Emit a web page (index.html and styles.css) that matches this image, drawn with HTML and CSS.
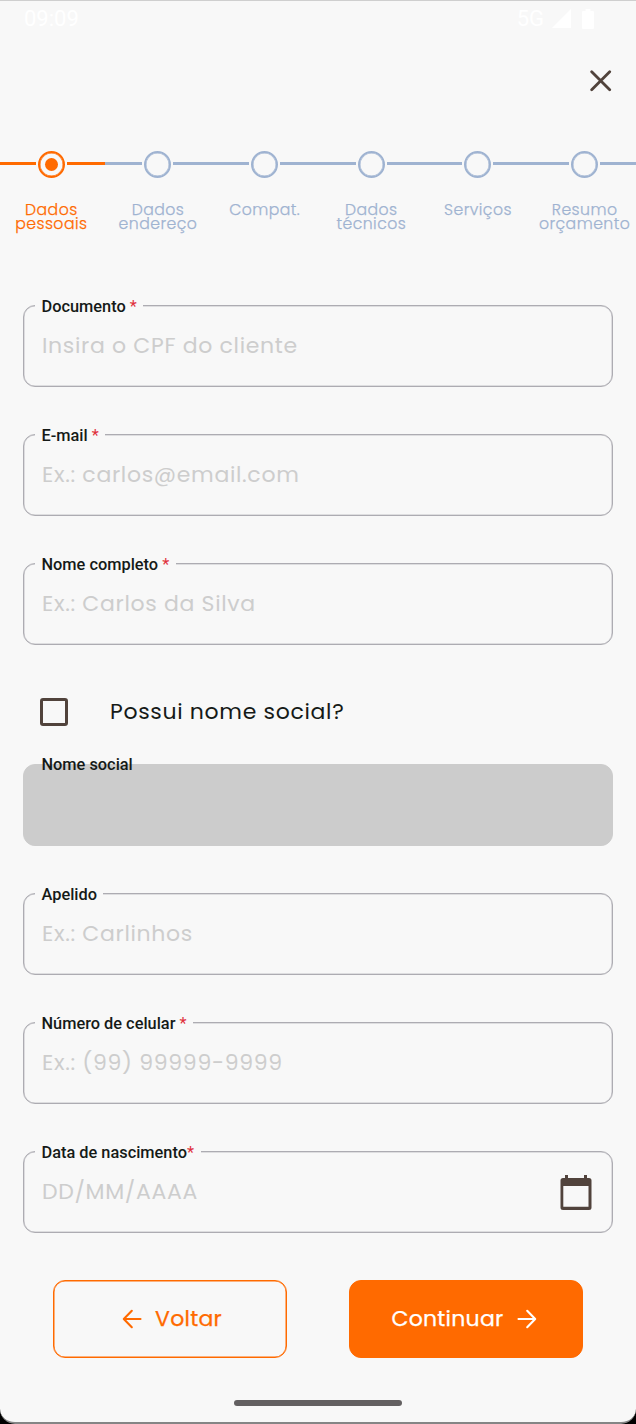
FILE: index.html
```html
<!DOCTYPE html>
<html lang="pt-BR">
<head>
<meta charset="utf-8">
<title>Dados pessoais</title>
<link rel="stylesheet" href="styles.css">
</head>
<body>
<main class="screen">
  <header class="status">
    <span>09:09</span>
    <div class="status-icons">
      <span>5G</span>
      <svg class="signal" width="19" height="19" viewBox="0 0 19 19"><path d="M19 0V19H0Z" fill="#fff"/></svg>
      <svg width="12" height="20" viewBox="0 0 12 20"><path d="M3.500 0h5v2H11a1 1 0 0 1 1 1v16a1 1 0 0 1-1 1H1a1 1 0 0 1-1-1V3a1 1 0 0 1 1-1h2.500Z" fill="#fff"/></svg>
    </div>
  </header>

  <div class="topbar">
    <svg width="22" height="22" viewBox="0 0 22 22"><path d="M1.700 1.800 19.700 19.800M19.700 1.800 1.700 19.800" fill="none" stroke="#51433c" stroke-width="2.800" stroke-linecap="round"/></svg>
  </div>

  <ol class="stepper">
    <li class="step active"><div class="track"><i class="dot"></i></div><p>Dados<br>pessoais</p></li>
    <li class="step"><div class="track"><i class="dot"></i></div><p>Dados<br>endereço</p></li>
    <li class="step"><div class="track"><i class="dot"></i></div><p>Compat.</p></li>
    <li class="step"><div class="track"><i class="dot"></i></div><p>Dados<br>técnicos</p></li>
    <li class="step"><div class="track"><i class="dot"></i></div><p>Serviços</p></li>
    <li class="step"><div class="track"><i class="dot"></i></div><p>Resumo<br>orçamento</p></li>
  </ol>

  <form class="form">
    <div class="field"><label>Documento <b>*</b></label><span class="hint">Insira o CPF do cliente</span></div>
    <div class="field"><label>E-mail <b>*</b></label><span class="hint">Ex.: carlos@email.com</span></div>
    <div class="field"><label>Nome completo <b>*</b></label><span class="hint">Ex.: Carlos da Silva</span></div>
    <div class="check"><i class="box"></i><span>Possui nome social?</span></div>
    <div class="field disabled"><label>Nome social</label></div>
    <div class="field"><label>Apelido</label><span class="hint">Ex.: Carlinhos</span></div>
    <div class="field"><label>Número de celular <b>*</b></label><span class="hint">Ex.: (99) 99999-9999</span></div>
    <div class="field"><label>Data de nascimento<b>*</b></label><span class="hint">DD/MM/AAAA</span>
      <svg class="calendar" width="32" height="36" viewBox="0 0 32 36"><path fill="#51433c" fill-rule="evenodd" d="M5 0h3v3h16V0h3v3h2a2.500 2.500 0 0 1 2.500 2.500v27A2.500 2.500 0 0 1 29 35H3a2.500 2.500 0 0 1-2.500-2.500v-27A2.500 2.500 0 0 1 3 3h2ZM3.300 11v20.800h25.200V11Z"/></svg>
    </div>
  </form>

  <div class="actions">
    <button class="btn outline" type="button">
      <svg width="20" height="20" viewBox="0 0 20 20"><path d="M18.500 10H2M9.800 1.800 1.800 10l8 8.200" fill="none" stroke="currentColor" stroke-width="2.100" stroke-linecap="round" stroke-linejoin="round"/></svg>
      <span>Voltar</span>
    </button>
    <button class="btn solid" type="button">
      <span>Continuar</span>
      <svg width="20" height="20" viewBox="0 0 20 20"><path d="M1.500 10H18M10.200 1.800l8 8.200-8 8.200" fill="none" stroke="currentColor" stroke-width="2.100" stroke-linecap="round" stroke-linejoin="round"/></svg>
    </button>
  </div>

  <div class="home"></div>
</main>
</body>
</html>
```
FILE: styles.css
```css
* { box-sizing: border-box; }
body { margin: 0; background: #000; }

.screen {
  display: flex;
  flex-direction: column;
  height: 1424px;
  overflow: hidden;
  border-top: 1px solid #cfcfcf;
  border-bottom: 2px solid #858585;
  border-radius: 0 0 15px 15px;
  background: #f8f8f8;
  color: #151a17;
  font-family: Poppins, Inter, "Open Sans", sans-serif;
}

.status {
  display: flex;
  justify-content: space-between;
  height: 36px;
  padding: 5px 42px 0 24px;
  color: #fff;
  font: 400 22px/26px Roboto, sans-serif;
}
.status-icons { display: flex; align-items: flex-start; }
.status-icons svg { margin-top: 3px; }
.status-icons .signal { margin: 3px 11px 0 8px; }

.topbar {
  display: flex;
  justify-content: flex-end;
  height: 113px;
  padding: 33px 24px 0 0;
}

.stepper {
  display: grid;
  grid-template-columns: repeat(6, 106.67px);
  height: 155px;
  margin: 0 -2px;
  padding: 0;
  list-style: none;
}
.step { color: #9fb3d1; }
.step.active { color: #ff6a00; }
.track {
  display: flex;
  align-items: center;
  gap: 2px;
  height: 28px;
}
.track::before, .track::after {
  content: "";
  flex: 1;
  height: 3px;
  margin-bottom: 1px;
  background: currentColor;
}
.dot {
  display: grid;
  place-items: center;
  width: 27px;
  height: 27px;
  border: 2px solid currentColor;
  border-radius: 50%;
  box-shadow: inset 0 0 0 0.5px currentColor;
}
.active .dot::before {
  content: "";
  width: 13px;
  height: 13px;
  border-radius: 50%;
  background: currentColor;
}
.step p {
  margin: 25px 0 0;
  font-size: 15.7px;
  font-weight: 300;
  letter-spacing: 0.45px;
  line-height: 14px;
  text-align: center;
  white-space: nowrap;
  -webkit-text-stroke: 0.25px currentColor;
}

.form {
  display: flex;
  flex-direction: column;
  gap: 47px;
  padding: 0 23px;
}
.field {
  position: relative;
  display: flex;
  align-items: center;
  justify-content: space-between;
  height: 82px;
  padding: 0 20px 2px 18px;
  border: 1px solid #adacb2;
  border-radius: 12px;
  box-shadow: inset 0 0 0 0.5px #c4c3c8;
}
.field label {
  position: absolute;
  top: -10px;
  left: 11px;
  padding: 0 6.5px;
  background: #f8f8f8;
  font: 500 16.35px/22px Roboto, sans-serif;
  white-space: nowrap;
}
.field b { color: #e0303c; font-weight: 400; }
.hint {
  color: #cdcdcd;
  font-size: 22px;
  letter-spacing: 0.67px;
}
.disabled { border-color: #ccc; background: #ccc; box-shadow: none; }
.disabled label { top: -11px; background: none; }
.calendar { margin-top: 4px; }

.check {
  display: flex;
  align-items: center;
  gap: 42px;
  height: 26px;
  margin: 7px 0 -8px 17px;
  font-size: 22px;
  letter-spacing: 0.67px;
}
.check span { padding-bottom: 1px; }
.box {
  width: 28px;
  height: 28px;
  border: 3px solid #51433c;
  border-radius: 3px;
}

.actions {
  display: flex;
  gap: 62px;
  padding: 47px 53px 0;
}
.btn {
  display: flex;
  align-items: center;
  justify-content: center;
  gap: 13px;
  width: 234px;
  height: 78px;
  padding: 0;
  border: 1px solid #ff6a00;
  border-radius: 12px;
  background: none;
  box-shadow: inset 0 0 0 0.5px #ff6a00;
  color: #ff6a00;
  font: 400 22px/30px Poppins, Inter, sans-serif;
  letter-spacing: 0.25px;
  -webkit-text-stroke: 0.25px currentColor;
}
.outline { padding-left: 4px; }
.solid { padding-right: 4px; background: #ff6a00; color: #fff; }

.home {
  align-self: center;
  width: 168px;
  height: 6px;
  margin-top: 42px;
  border-radius: 3px;
  background: #636061;
}
```
